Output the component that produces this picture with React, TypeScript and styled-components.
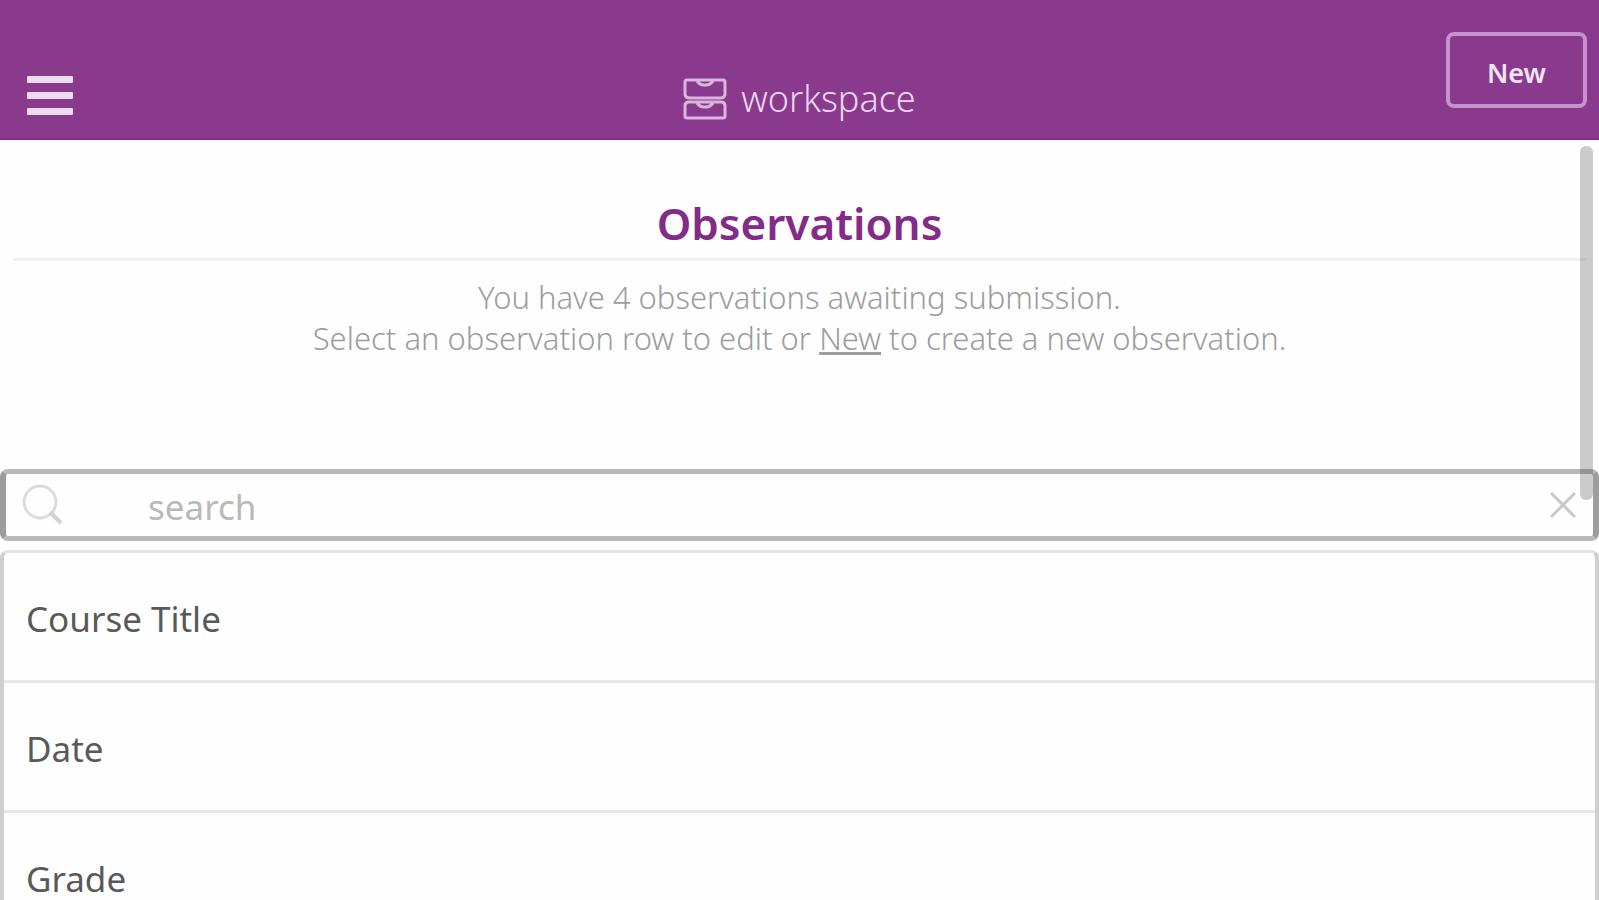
import React, { useState } from "react";
import styled, { createGlobalStyle } from "styled-components";

const GlobalStyle = createGlobalStyle`
  *, *::before, *::after { box-sizing: border-box; }
  body {
    margin: 0;
    background: #fefefe;
    color: #58595b;
    font-family: "Noto Sans", "Open Sans", sans-serif;
  }
  button, input { font: inherit; color: inherit; }
`;

const Page = styled.div`
  display: flex;
  flex-direction: column;
  height: 100vh;
`;

const Header = styled.header`
  display: grid;
  grid-template-columns: 1fr auto 1fr;
  align-items: end;
  padding: 32px 12px 15px;
  background: #893a8c;
  border-bottom: 2px solid #7f2c82;
`;

const MenuButton = styled.button`
  display: flex;
  flex-direction: column;
  justify-content: center;
  gap: 9px;
  justify-self: start;
  width: 76px;
  height: 56px;
  padding: 0 15px;
  border: 0;
  background: none;
  cursor: pointer;
`;

const MenuBar = styled.span`
  height: 7px;
  border-radius: 1px;
  background: #ecdcef;
`;

const Brand = styled.a`
  display: flex;
  align-items: center;
  gap: 14px;
  color: #ecd6ef;
  font-size: 36px;
  font-weight: 300;
  line-height: 48px;
  text-decoration: none;
`;

const NewButton = styled.button`
  align-self: start;
  justify-self: end;
  width: 141px;
  height: 76px;
  margin-bottom: 15px;
  padding: 4px 0 0;
  border: 4px solid #c792cb;
  border-radius: 8px;
  background: none;
  color: #f2e4f5;
  font-size: 27px;
  font-weight: 600;
  cursor: pointer;
`;

const Body = styled.div`
  position: relative;
  flex: 1;
  min-height: 0;
`;

const Content = styled.main`
  height: 100%;
  overflow-y: auto;
  scrollbar-width: none;
`;

const ScrollThumb = styled.div`
  position: absolute;
  top: 6px;
  right: 6px;
  width: 13px;
  height: 354px;
  border-radius: 6px;
  background: rgba(0, 0, 0, 0.2);
  pointer-events: none;
`;

const Intro = styled.section`
  margin: 0 13px;
  padding-bottom: 110px;
  text-align: center;
`;

const Title = styled.h1`
  margin: 0;
  padding: 50px 0 2px;
  border-bottom: 3px solid #f1f1f1;
  color: #822b88;
  font-size: 44px;
  font-weight: 600;
  line-height: 66px;
`;

const Summary = styled.p`
  margin: 0;
  padding-top: 16px;
  color: #9c9d9c;
  font-size: 31px;
  font-weight: 300;
  line-height: 41px;
`;

const TextLink = styled.a`
  color: inherit;
  text-decoration: underline;
`;

const SearchBox = styled.form`
  display: flex;
  align-items: center;
  height: 72px;
  padding: 0 17px 0 16px;
  border: solid #b9b9b9;
  border-width: 5px 6px;
  border-left-color: #9d9d9d;
  border-right-color: #9d9d9d;
  border-radius: 8px;
`;

const SearchInput = styled.input`
  flex: 1;
  min-width: 0;
  height: 100%;
  padding: 2px 0 0 84px;
  border: 0;
  outline: 0;
  background: none;
  font-size: 35px;
  &::placeholder { color: #b9b9b9; opacity: 1; }
`;

const ClearButton = styled.button`
  display: flex;
  padding: 0;
  border: 0;
  background: none;
  cursor: pointer;
`;

const FieldList = styled.ul`
  margin: 9px 0 0;
  padding: 0;
  border: solid #cfcfcf;
  border-width: 3px 4px;
  border-top-color: #e4e4e4;
  border-radius: 8px;
  list-style: none;
`;

const FieldRow = styled.li`
  height: 130px;
  padding: 0 22px;
  border-bottom: 3px solid #e7e7e7;
  font-size: 35px;
  line-height: 132px;
`;

const DrawerIcon = () => (
  <svg width="44" height="42" viewBox="0 0 44 42" fill="none" stroke="#d9b6de" strokeWidth="3" strokeLinejoin="round" aria-hidden="true">
    <path d="M4 2h36q2 0 2 2v12q0 4-5 4H7q-5 0-5-4V4q0-2 2-2Z" />
    <path d="M6 24h32q4 0 4 4v10q0 2-2 2H4q-2 0-2-2V28q0-4 4-4Z" />
    <path d="M14 3q3 4 7 4h2q4 0 7-4M14 25q3 4 7 4h2q4 0 7-4" />
  </svg>
);

const SearchIcon = () => (
  <svg width="42" height="42" viewBox="0 0 42 42" fill="none" stroke="#dcdcdc" strokeWidth="3" aria-hidden="true">
    <circle cx="18" cy="18" r="16" />
    <path d="M28 28l11 11" stroke="#d2d2d2" strokeWidth="4" />
  </svg>
);

const CloseIcon = () => (
  <svg width="26" height="26" viewBox="0 0 26 26" stroke="#c8c8c8" strokeWidth="3" aria-hidden="true">
    <path d="M1 1l24 24M25 1L1 25" />
  </svg>
);

const fields = ["Course Title", "Date", "Grade"];

export default function App() {
  const [query, setQuery] = useState("");
  return (
    <Page>
      <GlobalStyle />
      <Header>
        <MenuButton type="button" aria-label="Menu">
          <MenuBar />
          <MenuBar />
          <MenuBar />
        </MenuButton>
        <Brand href="#home">
          <DrawerIcon />
          workspace
        </Brand>
        <NewButton type="button">New</NewButton>
      </Header>
      <Body>
        <Content>
          <Intro>
            <Title>Observations</Title>
            <Summary>
              You have 4 observations awaiting submission.
              <br />
              Select an observation row to edit or <TextLink href="#new">New</TextLink> to create a new observation.
            </Summary>
          </Intro>
          <SearchBox role="search" onSubmit={(e) => e.preventDefault()}>
            <SearchIcon />
            <SearchInput
              type="text"
              aria-label="Search observations"
              placeholder="search"
              value={query}
              onChange={(e) => setQuery(e.target.value)}
            />
            <ClearButton type="button" aria-label="Clear search" onClick={() => setQuery("")}>
              <CloseIcon />
            </ClearButton>
          </SearchBox>
          <FieldList>
            {fields.map((field) => (
              <FieldRow key={field}>{field}</FieldRow>
            ))}
          </FieldList>
        </Content>
        <ScrollThumb />
      </Body>
    </Page>
  );
}
